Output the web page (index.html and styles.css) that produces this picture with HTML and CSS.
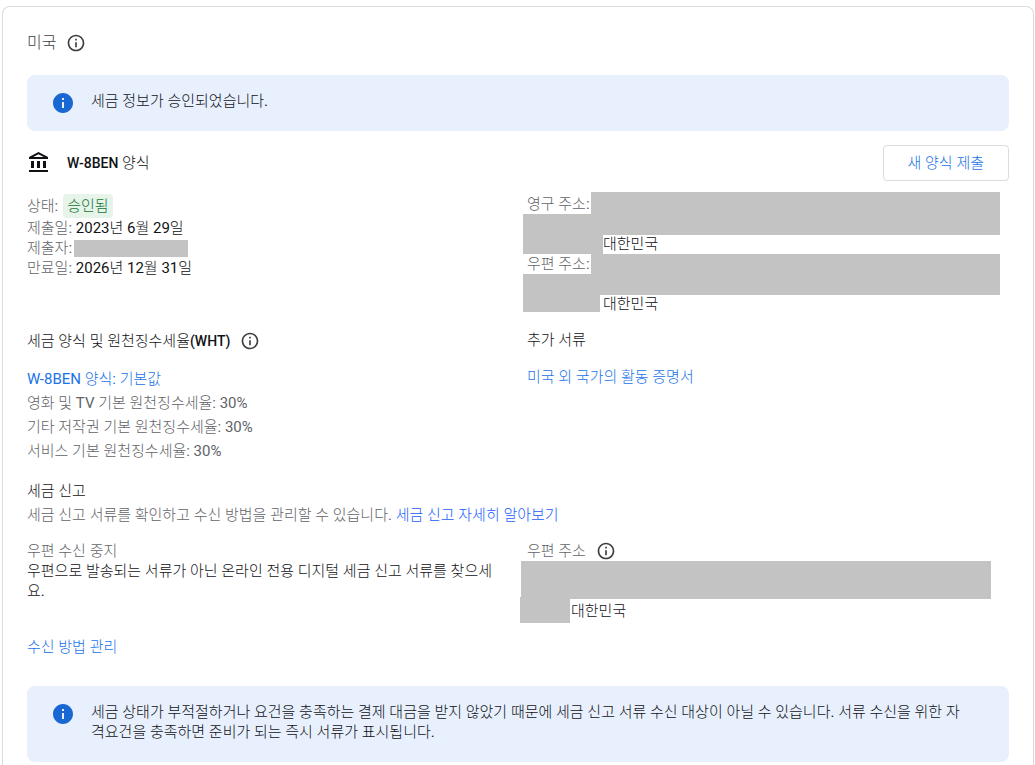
FILE: index.html
```html
<!DOCTYPE html>
<html lang="ko">
<head>
<meta charset="utf-8">
<title>세금 정보</title>
<meta name="viewport" content="width=device-width, initial-scale=1">
<link rel="stylesheet" href="styles.css">
</head>
<body>
<svg class="defs" aria-hidden="true">
  <symbol id="info-outline" viewBox="0 0 24 24"><path d="M11 7h2v2h-2zm0 4h2v6h-2zm1-9C6.480 2 2 6.480 2 12s4.480 10 10 10 10-4.480 10-10S17.520 2 12 2zm0 18c-4.410 0-8-3.590-8-8s3.590-8 8-8 8 3.590 8 8-3.590 8-8 8z"/></symbol>
  <symbol id="info-filled" viewBox="0 0 24 24"><path d="M12 2C6.480 2 2 6.480 2 12s4.480 10 10 10 10-4.480 10-10S17.520 2 12 2zm1 15h-2v-6h2v6zm0-8h-2V7h2v2z"/></symbol>
</svg>
<main class="card">
  <header class="heading">
    <h1 class="title">미국</h1>
    <button class="info" type="button" aria-label="미국 정보"><svg class="icon-small"><use href="#info-outline"/></svg></button>
  </header>

  <div class="notice" role="status">
    <svg class="icon-notice" aria-hidden="true"><use href="#info-filled"/></svg>
    <p class="notice-text">세금 정보가 승인되었습니다.</p>
  </div>

  <div class="form-bar">
    <svg class="icon-bank" viewBox="0 0 24 24" aria-hidden="true"><path d="M7 10H4v7h3v-7zm6 0h-3v7h3v-7zm8 9H2v2h19v-2zm-2-9h-3v7h3v-7zm-7.500-6.740L16.710 6H6.290l5.210-2.740m0-2.260L2 6v2h19V6l-9.500-5z"/></svg>
    <h2 class="form-name"><span class="strong">W-8BEN</span> 양식</h2>
    <button class="submit" type="button">새 양식 제출</button>
  </div>

  <section class="columns details">
    <div>
      <p class="status"><span class="label">상태:</span> <span class="chip">승인됨</span></p>
      <p><span class="label">제출일:</span> 2023년 6월 29일</p>
      <p class="submitter"><span class="label">제출자:</span><span class="mask"></span></p>
      <p><span class="label">만료일:</span> 2026년 12월 31일</p>
    </div>
    <div>
      <div class="address">
        <p class="label">영구 주소:</p>
        <p class="country">대한민국</p>
        <span class="cover cover-wide"></span><span class="cover cover-short"></span>
      </div>
      <div class="address postal">
        <p class="label">우편 주소:</p>
        <p class="country">대한민국</p>
        <span class="cover cover-wide"></span><span class="cover cover-short"></span>
      </div>
    </div>
  </section>

  <section class="columns rates">
    <div>
      <div class="heading">
        <h3>세금 양식 및 원천징수세율<span class="strong">(WHT)</span></h3>
        <button class="info" type="button" aria-label="원천징수세율 정보"><svg class="icon-small"><use href="#info-outline"/></svg></button>
      </div>
      <ul class="list">
        <li><a href="#form">W-8BEN 양식: 기본값</a></li>
        <li>영화 및 TV 기본 원천징수세율: 30%</li>
        <li>기타 저작권 기본 원천징수세율: 30%</li>
        <li>서비스 기본 원천징수세율: 30%</li>
      </ul>
    </div>
    <div>
      <h3 class="documents-title">추가 서류</h3>
      <p class="document"><a href="#certificate">미국 외 국가의 활동 증명서</a></p>
    </div>
  </section>

  <section class="report">
    <h3>세금 신고</h3>
    <p class="label">세금 신고 서류를 확인하고 수신 방법을 관리할 수 있습니다. <a class="learn" href="#learn">세금 신고 자세히 알아보기</a></p>
  </section>

  <section class="columns delivery">
    <div>
      <h3 class="label">우편 수신 중지</h3>
      <p>우편으로 발송되는 서류가 아닌 온라인 전용 디지털 세금 신고 서류를 찾으세요.</p>
    </div>
    <div class="address mailing">
      <div class="heading">
        <h3 class="label">우편 주소</h3>
        <button class="info" type="button" aria-label="우편 주소 정보"><svg class="icon-small"><use href="#info-outline"/></svg></button>
      </div>
      <p class="country">대한민국</p>
      <span class="cover cover-wide"></span><span class="cover cover-short"></span>
    </div>
  </section>

  <p class="manage"><a href="#manage">수신 방법 관리</a></p>

  <div class="notice" role="note">
    <svg class="icon-notice" aria-hidden="true"><use href="#info-filled"/></svg>
    <p class="notice-text">세금 상태가 부적절하거나 요건을 충족하는 결제 대금을 받지 않았기 때문에 세금 신고 서류 수신 대상이 아닐 수 있습니다. 서류 수신을 위한 자격요건을 충족하면 준비가 되는 즉시 서류가 표시됩니다.</p>
  </div>
</main>
</body>
</html>
```
FILE: styles.css
```css
* { box-sizing: border-box; }
html { background: #fff; }
body {
  display: flow-root;
  margin: 0;
  color: #111215;
  font: 400 15px/20px Roboto, "Noto Sans CJK KR Light", "Noto Sans CJK KR", sans-serif;
}
h1, h2, h3, p, ul { margin: 0; padding: 0; font-size: inherit; font-weight: 400; }
ul { list-style: none; }
a { color: #1a73e8; text-decoration: none; }
button { font: inherit; cursor: pointer; }
svg { display: block; fill: currentColor; flex: none; }
.defs { display: none; }
.strong { font-weight: 500; font-size: 14px; }

.card {
  min-height: calc(100vh - 6px);
  margin: 6px 1px 0 2px;
  padding: 24px 24px 0;
  border: 1px solid #dadce0;
  border-bottom: 0;
  border-radius: 8px 8px 0 0;
}
.heading { display: flex; align-items: center; gap: 10px; height: 24px; }
.card > .heading { margin-bottom: 20px; }
.title { font-size: 16px; color: #3c4043; }
.info { padding: 0; border: 0; background: none; color: #3c4043; }
.icon-small { width: 20px; height: 20px; }

.notice {
  display: flex;
  gap: 16px;
  padding: 16px 40px 20px 24px;
  border-radius: 8px;
  background: #e8f0fe;
}
.icon-notice { width: 24px; height: 24px; color: #1967d2; }
.notice-text { flex: 1; }
.notice .icon-notice { margin-bottom: -4px; }

.form-bar { display: flex; align-items: center; margin-top: 14px; }
.icon-bank { width: 24px; height: 24px; margin-right: 16px; }
.form-name { flex: 1; }
.submit {
  height: 36px;
  padding: 0 24px;
  border: 1px solid #dadce0;
  border-radius: 4px;
  background: #fff;
  color: #1a73e8;
}

.columns { display: grid; grid-template-columns: 1fr 1fr; column-gap: 18px; }
.label { color: #5f6368; }
.details { margin-top: 13px; }
.status { display: flex; gap: 5px; align-items: center; height: 24px; }
.chip { padding: 2px 4px; border-radius: 4px; background: #e6f4ea; color: #137333; }
.submitter { display: flex; align-items: center; gap: 2px; }
.mask { width: 114px; height: 17px; background: #c3c3c3; }

.address { position: relative; }
.country { padding: 20px 0 0 76px; }
.cover { position: absolute; background: #c3c3c3; }
.cover-wide { top: -2px; left: 64px; right: 9px; height: 43px; }
.cover-short { top: 20px; left: -4px; width: 80px; height: 40px; }
.postal .cover-wide { top: 0; height: 41px; }
.postal .cover-short { width: 77px; height: 38px; }

.rates { margin-top: 15px; }
.list { margin-top: 14px; line-height: 24px; color: #5f6368; }
.documents-title { line-height: 22px; }
.document { margin-top: 16px; }

.report { margin-top: 16px; line-height: 24px; }
.learn { color: #1a5cff; }
.delivery { margin-top: 14px; }
.mailing .heading { height: 20px; }
.mailing .country { padding: 40px 0 0 44px; }
.mailing .cover-wide { top: 20px; left: -6px; right: 18px; height: 38px; }
.mailing .cover-short { top: 56px; left: -7px; width: 50px; height: 26px; }
.manage { margin: 16px 0 29px; }
```
